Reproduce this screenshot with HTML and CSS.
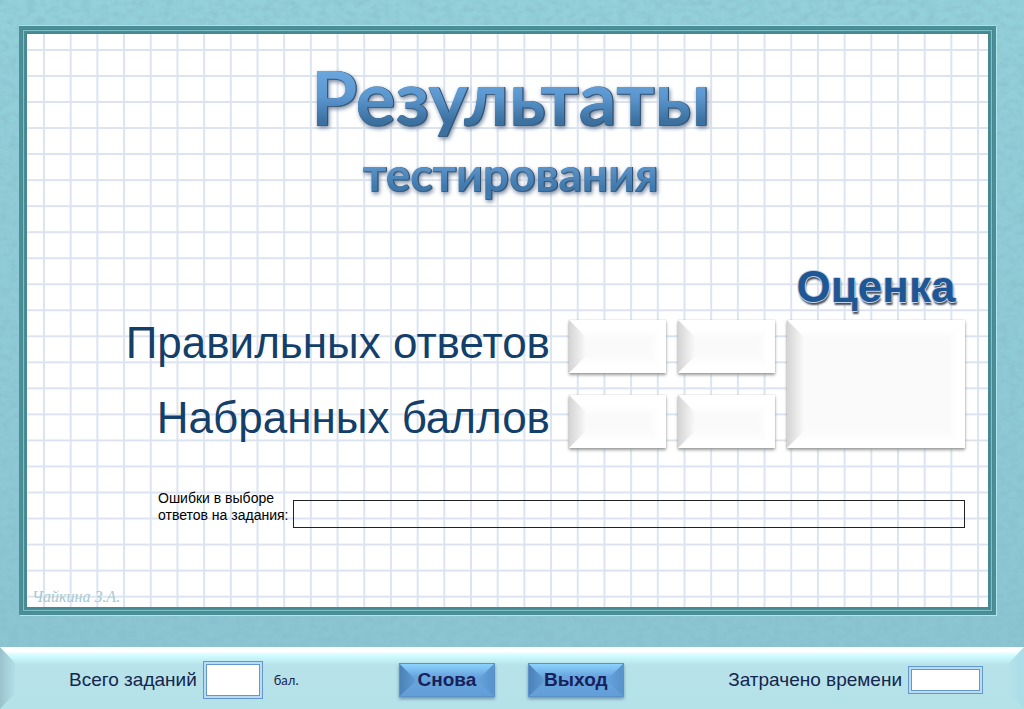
FILE: index.html
```html
<!DOCTYPE html>
<html lang="ru">
<head>
<meta charset="utf-8">
<title>Результаты тестирования</title>
<link rel="stylesheet" href="styles.css">
</head>
<body>
<svg class="texture" aria-hidden="true">
  <filter id="paper" x="0" y="0" width="100%" height="100%">
    <feTurbulence type="fractalNoise" baseFrequency="0.11 0.16" numOctaves="3" seed="4"/>
    <feColorMatrix values="0 0 0 0 0.24  0 0 0 0 0.5  0 0 0 0 0.58  1.2 0 0 0 -0.45"/>
  </filter>
  <rect width="100%" height="100%" filter="url(#paper)"/>
</svg>
<main class="stage">
  <section class="frame">
    <div class="sheet">
      <h1 class="title">
        <span class="title-main">Результаты</span>
        <span class="title-sub">тестирования</span>
      </h1>
      <div class="scores">
        <h2 class="grade-title">Оценка</h2>
        <span class="score-label" id="answers">Правильных ответов</span>
        <output class="tile" aria-labelledby="answers"></output>
        <output class="tile" aria-labelledby="answers"></output>
        <output class="tile grade" aria-label="Оценка"></output>
        <span class="score-label" id="points">Набранных баллов</span>
        <output class="tile" aria-labelledby="points"></output>
        <output class="tile" aria-labelledby="points"></output>
      </div>
      <div class="errors">
        <label for="errors">Ошибки в выборе<br>ответов на задания:</label>
        <input id="errors" class="errors-box" type="text" readonly>
      </div>
      <p class="author">Чайкина З.А.</p>
    </div>
  </section>
</main>
<footer class="bar">
  <div class="group">
    <label for="total">Всего заданий</label>
    <input id="total" class="field total" type="text" readonly>
    <span class="unit">бал.</span>
  </div>
  <div class="group actions">
    <button class="button" type="button">Снова</button>
    <button class="button" type="button">Выход</button>
  </div>
  <div class="group">
    <label for="time">Затрачено времени</label>
    <input id="time" class="field time" type="text" readonly>
  </div>
</footer>
</body>
</html>
```
FILE: styles.css
```css
* { box-sizing: border-box; }

body {
  margin: 0;
  min-height: 100vh;
  display: flex;
  flex-direction: column;
  background: linear-gradient(#93d0da, #8ac4d1);
  font-family: "Liberation Sans", Arial, sans-serif;
}

.texture {
  position: absolute;
  inset: 0;
  z-index: -1;
  width: 100%;
  height: 100%;
}

.stage {
  flex: 1;
  display: flex;
  padding: 26px 28px 32px 19px;
}

.frame {
  flex: 1;
  display: flex;
  border: 3px solid #4a8f98;
  background: #4a8f98;
  box-shadow: 0 -1px #b4dbe8, 1px 1px #b4e4ec;
}

.sheet {
  flex: 1;
  display: flex;
  flex-direction: column;
  border: 5px double #468991;
  outline: 1px solid #80c0c9;
  outline-offset: -2px;
  padding: 22px 23px 0 0;
  background:
    linear-gradient(90deg, #dbe4f0 2px, transparent 2px) 16px 0 / calc(100% / 36) 100% padding-box,
    linear-gradient(#dbe3f0 2px, transparent 2px) 0 15px / 100% calc(100% / 22) padding-box,
    #fff padding-box;
}

.title {
  margin: 0 0 0 29px;
  display: flex;
  flex-direction: column;
  align-items: center;
  font-family: Lato, "Open Sans", sans-serif;
}

.title-main,
.title-sub {
  color: transparent;
  -webkit-background-clip: text;
  background-clip: text;
  filter: drop-shadow(1px 0 #31506f) drop-shadow(0 1px #40607d) drop-shadow(1px 2px 2px #7888a0);
}

.title-main {
  background-image: linear-gradient(#6aa5dd 20%, #5c98d0 50%, #3b709f 82%);
  font-size: 75px;
  line-height: 80px;
}

.title-sub {
  margin-top: 12px;
  background-image: linear-gradient(#6098ce 30%, #4079ad 75%);
  font-size: 46px;
  line-height: 52px;
}

.scores {
  margin-top: 63px;
  display: grid;
  grid-template-columns: 1fr 97px 97px 178px;
  column-gap: 12px;
}

.grade-title {
  grid-column: 4;
  margin: 0 0 9px;
  text-align: center;
  color: #1f5795;
  font-size: 44px;
  line-height: 48px;
  text-shadow: 1px 0 #c3d5e8, -1px 0 #c3d5e8, 0 -1px #c3d5e8, 0 1px #c3d5e8, 1px 3px 2px #454c58;
}

.score-label {
  grid-column: 1;
  padding-right: 7px;
  text-align: right;
  color: #143f6b;
  font-size: 44px;
  line-height: 46px;
  white-space: nowrap;
}

.tile {
  position: relative;
  height: 53px;
  margin-bottom: 22px;
  background: linear-gradient(#fff 10px, #fafafa 20px, #fafafa calc(100% - 18px), #fff calc(100% - 6px));
  box-shadow: 0 2px 3px #999, 0 0 1px #bbb;
}

.tile::before {
  content: "";
  position: absolute;
  inset: 0 auto 0 0;
  width: 17px;
  background: linear-gradient(90deg, #d4d4d4, #fafafa);
  clip-path: polygon(0 0, 100% 17px, 100% calc(100% - 17px), 0 100%);
}

.tile::after {
  content: "";
  position: absolute;
  inset: 0 0 0 auto;
  width: 17px;
  background: linear-gradient(90deg, #fafafa, #fff 60%);
  clip-path: polygon(100% 0, 0 17px, 0 calc(100% - 17px), 100% 100%);
}

.grade {
  grid-area: 2 / 4 / 4 / 5;
  height: auto;
}

.errors {
  margin: 16px 0 0 131px;
  display: flex;
  align-items: center;
  gap: 5px;
  font-size: 14px;
  line-height: 17px;
  color: #000;
}

.errors-box {
  flex: 1;
  min-width: 0;
  height: 28px;
  margin-top: 14px;
  border: 1px solid #222;
  background: transparent;
}

.author {
  margin: auto 0 0 5px;
  color: #a5cbd1;
  font: italic 16px/20px "Liberation Serif", serif;
}

.bar {
  position: relative;
  min-height: 62px;
  display: flex;
  align-items: center;
  justify-content: space-between;
  padding: 4px 41px 0 69px;
  background: linear-gradient(#fff 4px, #cdfbff 9px, #b7e2ea 18px, #b5e1e9);
  color: #15264d;
  font-size: 19px;
}

.bar::before,
.bar::after {
  content: "";
  position: absolute;
  top: 0;
  bottom: 0;
  width: 15px;
}

.bar::before {
  left: 0;
  background: linear-gradient(90deg, #9ac2cd, #b3dfe8);
  clip-path: polygon(0 0, 100% 16px, 100% 46px, 0 100%);
}

.bar::after {
  right: 0;
  background: linear-gradient(90deg, #b5e1e9, #a9dde8);
  clip-path: polygon(100% 0, 0 16px, 0 46px, 100% 100%);
}

.group {
  display: flex;
  align-items: center;
  gap: 6px;
}

.actions {
  gap: 33px;
  padding-right: 4px;
}

.field {
  border: 1px solid #6398cf;
  background: #fff;
  box-shadow: inset 0 0 0 2px #b9dcf2, inset 0 0 0 3px #6398cf;
  outline: 0;
}

.total { width: 60px; height: 38px; }
.time { width: 75px; height: 28px; }

.unit {
  margin-left: 5px;
  font-family: Lato, sans-serif;
  font-size: 13px;
}

.button {
  position: relative;
  width: 96px;
  height: 34px;
  padding: 0;
  border: 1px solid #5a92c8;
  background: linear-gradient(#8cd2ff, #69a6df 12px, #629ed8);
  box-shadow: 0 2px 3px #6f97a8;
  color: #17225c;
  font: bold 19px/32px "Liberation Sans", Arial, sans-serif;
}

.button::before,
.button::after {
  content: "";
  position: absolute;
  top: 0;
  bottom: 0;
  width: 15px;
}

.button::before {
  left: 0;
  background: linear-gradient(90deg, #4b82b8, #5f9ad2);
  clip-path: polygon(0 0, 100% 15px, 100% 18px, 0 100%);
}

.button::after {
  right: 0;
  background: linear-gradient(90deg, #64a0da, #5792cb);
  clip-path: polygon(100% 0, 0 15px, 0 18px, 100% 100%);
}
```
